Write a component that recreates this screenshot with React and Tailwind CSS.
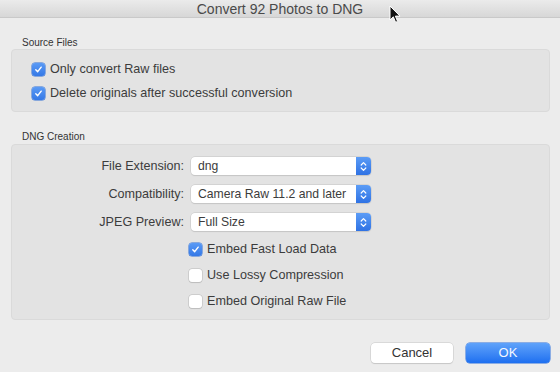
import React from "react";

const font = { fontFamily: '"Liberation Sans", Arial, sans-serif' };

function Check({ checked }) {
  if (checked) {
    return (
      <span className="flex h-[13px] w-[13px] shrink-0 items-center justify-center rounded-[3px] bg-gradient-to-b from-[#5a9af5] to-[#3478e6] shadow-[0_0_0_0.5px_#2f6fd6]">
        <svg width="9" height="9" viewBox="0 0 10 10">
          <path d="M2 5.3 L4.1 7.4 L8 2.4" fill="none" stroke="white" strokeWidth="1.6" strokeLinecap="round" strokeLinejoin="round" />
        </svg>
      </span>
    );
  }
  return (
    <span className="h-[13px] w-[13px] shrink-0 rounded-[3px] bg-white shadow-[0_0_0_0.5px_#b9b9b9,0_0.5px_1px_rgba(0,0,0,0.15)]" />
  );
}

function CheckRow({ checked, label, className = "" }) {
  return (
    <div className={"flex items-center gap-[5px] " + className}>
      <Check checked={checked} />
      <span className="text-[12.6px] text-[#3c3c3c]">{label}</span>
    </div>
  );
}

function Select({ value }) {
  return (
    <div className="flex h-[18px] w-[180px] items-stretch rounded-[4px] bg-white shadow-[0_0_0_0.5px_#c4c4c4,0_1px_1px_rgba(0,0,0,0.12)]">
      <span className="flex flex-1 items-center overflow-hidden whitespace-nowrap pl-[7px] text-[12.2px] text-[#3c3c3c]">{value}</span>
      <span className="flex w-[15px] shrink-0 items-center justify-center rounded-r-[4px] bg-gradient-to-b from-[#5b9cf6] to-[#2f72e4]">
        <svg width="7" height="11" viewBox="0 0 7 11">
          <path d="M1.2 4 L3.5 1.7 L5.8 4 M1.2 7 L3.5 9.3 L5.8 7" fill="none" stroke="white" strokeWidth="1.2" strokeLinecap="round" strokeLinejoin="round" />
        </svg>
      </span>
    </div>
  );
}

function SelectRow({ label, value }) {
  return (
    <div className="flex h-[28px] items-center">
      <span className="w-[172px] text-right text-[12.6px] text-[#3c3c3c]">{label}</span>
      <div className="ml-[7px]">
        <Select value={value} />
      </div>
    </div>
  );
}

export default function App() {
  return (
    <div className="relative flex h-[372px] w-[560px] flex-col overflow-hidden bg-[#ececec]" style={font}>
      <div className="flex h-[18px] shrink-0 items-center justify-center border-b border-[#c9c9c9] bg-gradient-to-b from-[#ebebeb] to-[#d7d7d7]">
        <span className="text-[14px] leading-none text-[#4a4a4a]">Convert 92 Photos to DNG</span>
      </div>

      <div className="flex flex-col pl-[11px] pr-[10px]">
        <div className="mt-[19px] h-[12px] pl-[11px] text-[10px] leading-[12px] text-[#333]">Source Files</div>
        <div className="flex h-[63px] flex-col rounded-[4px] border border-[#dadada] bg-[#e3e3e3] pl-[20px] pt-[7px]">
          <CheckRow className="h-[24px]" checked label="Only convert Raw files" />
          <CheckRow className="h-[24px]" checked label="Delete originals after successful conversion" />
        </div>

        <div className="mt-[19px] h-[13px] pl-[11px] text-[10px] leading-[12px] text-[#333]">DNG Creation</div>
        <div className="flex h-[176px] flex-col rounded-[4px] border border-[#dadada] bg-[#e3e3e3] pt-[7px]">
          <SelectRow label="File Extension:" value="dng" />
          <SelectRow label="Compatibility:" value="Camera Raw 11.2 and later" />
          <SelectRow label="JPEG Preview:" value="Full Size" />
          <CheckRow className="h-[26px] pl-[177px]" checked label="Embed Fast Load Data" />
          <CheckRow className="h-[26px] pl-[177px]" label="Use Lossy Compression" />
          <CheckRow className="h-[26px] pl-[177px]" label="Embed Original Raw File" />
        </div>

        <div className="mt-[23px] flex justify-end gap-[13px]">
          <button className="flex h-[20px] w-[82px] items-center justify-center rounded-[4px] bg-white text-[13px] text-[#333] shadow-[0_0_0_0.5px_#c6c6c6,0_1px_1px_rgba(0,0,0,0.15)]">
            Cancel
          </button>
          <button className="flex h-[20px] w-[84px] items-center justify-center rounded-[4px] bg-gradient-to-b from-[#5fa2fa] to-[#1d6ff0] text-[13px] text-[#f4f8ff] shadow-[0_0_0_0.5px_#2a6fdc]">
            OK
          </button>
        </div>
      </div>

      <svg className="absolute left-[389px] top-[5px]" width="12" height="19" viewBox="0 0 12 19">
        <path d="M1 1 L1 15 L4.3 11.8 L6.6 17.3 L8.6 16.4 L6.4 11.1 L11 11.1 Z" fill="#111" stroke="white" strokeWidth="1" strokeLinejoin="round" />
      </svg>
    </div>
  );
}
